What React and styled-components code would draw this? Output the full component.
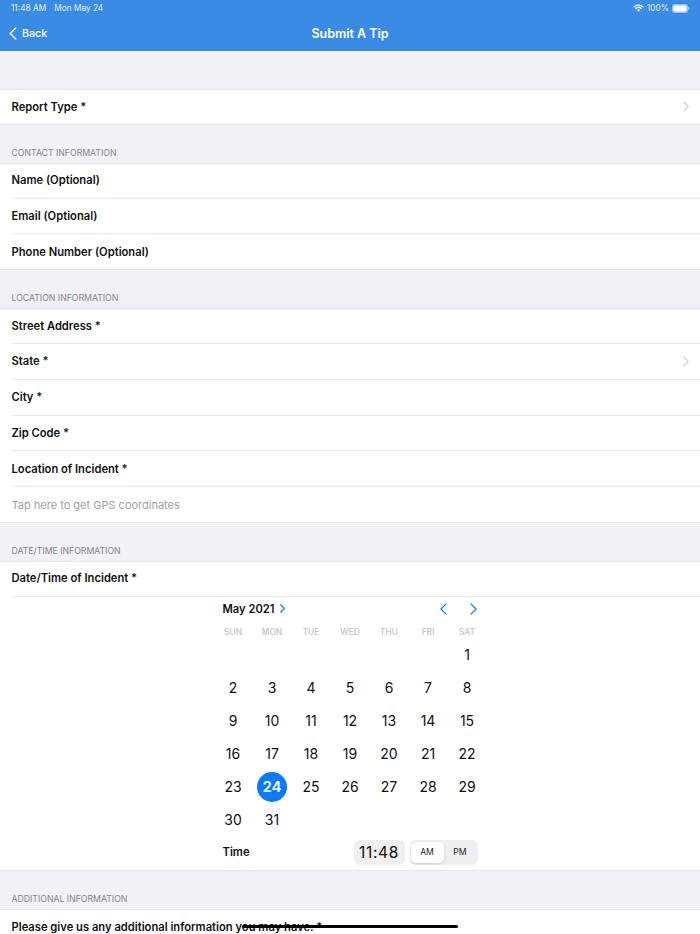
import React from "react";
import styled, { createGlobalStyle } from "styled-components";

const GlobalStyle = createGlobalStyle`
  html, body {
    margin: 0;
    padding: 0;
    background: #f1f1f6;
  }
  body {
    font-family: Inter, "Liberation Sans", sans-serif;
    -webkit-font-smoothing: antialiased;
  }
`;

const Page = styled.div`
  position: relative;
  width: 700px;
  height: 934px;
  overflow: hidden;
  background: #f1f1f6;
`;

const NavBar = styled.header`
  height: 51px;
  background: #3a8be3;
  color: #fff;
  box-sizing: border-box;
`;

const StatusBar = styled.div`
  display: flex;
  justify-content: space-between;
  align-items: center;
  height: 16px;
  padding: 0 10px 0 11px;
  font-size: 8.3px;
  color: #e4effb;
`;

const StatusGroup = styled.div`
  display: flex;
  align-items: center;
  gap: ${(p) => p.$gap}px;
`;

const NavRow = styled.div`
  display: grid;
  grid-template-columns: 1fr auto 1fr;
  align-items: center;
  height: 35px;
`;

const BackLink = styled.div`
  display: flex;
  align-items: center;
  gap: 5px;
  padding-left: 9px;
  font-size: 10.7px;
  font-weight: 500;
`;

const Title = styled.div`
  font-size: 12.5px;
  font-weight: 600;
`;

const SectionHead = styled.div`
  display: flex;
  align-items: flex-end;
  height: 38.1px;
  box-sizing: border-box;
  padding: 0 11.5px 5px;
  font-size: 8.7px;
  color: #85858b;
`;

const Group = styled.section`
  background: #fff;
  box-shadow: inset 0 -1px 0 #e6e6ea, inset 0 1px 0 #e6e6ea;
`;

const Row = styled.div`
  height: 35.75px;
  box-sizing: border-box;
  margin-left: 11.5px;
  display: flex;
  align-items: center;
  justify-content: space-between;
  padding-right: 11px;
  border-bottom: ${(p) => (p.$last ? "none" : "1px solid #e9e9ed")};
  font-size: ${(p) => (p.$hint ? 11 : 11.2)}px;
  font-weight: ${(p) => (p.$hint ? 400 : 600)};
  color: ${(p) => (p.$hint ? "#a0a0a5" : "#111")};
`;

const Calendar = styled.div`
  width: 273px;
  margin: 0 auto;
  padding-bottom: 6.2px;
`;

const MonthBar = styled.div`
  display: flex;
  align-items: center;
  justify-content: space-between;
  height: 24px;
  padding: 0 10px 0 9px;
`;

const MonthLabel = styled.div`
  display: flex;
  align-items: center;
  gap: 5px;
  font-size: 11.2px;
  font-weight: 600;
  color: #111;
`;

const MonthNav = styled.div`
  display: flex;
  align-items: center;
  gap: 23px;
`;

const WeekGrid = styled.div`
  display: grid;
  grid-template-columns: repeat(7, 39px);
  height: 17.5px;
  box-sizing: border-box;
  padding-top: 6.4px;
  align-items: start;
`;

const WeekDay = styled.div`
  text-align: center;
  font-size: 8.4px;
  line-height: 10px;
  font-weight: 500;
  color: #c3c3c6;
`;

const DayGrid = styled.div`
  display: grid;
  grid-template-columns: repeat(7, 39px);
  grid-auto-rows: 33px;
`;

const Day = styled.div`
  display: flex;
  align-items: center;
  justify-content: center;
  font-size: 14px;
  font-weight: 400;
  color: #111;
`;

const Today = styled.div`
  width: 30px;
  height: 30px;
  border-radius: 50%;
  background: #0a7bfe;
  color: #fff;
  font-weight: 600;
  font-size: 15px;
  display: flex;
  align-items: center;
  justify-content: center;
`;

const TimeRow = styled.div`
  display: flex;
  align-items: center;
  justify-content: space-between;
  height: 26px;
  margin-top: 3px;
  padding: 0 9px;
`;

const TimeLabel = styled.div`
  font-size: 11.2px;
  font-weight: 600;
  color: #111;
`;

const TimeControls = styled.div`
  display: flex;
  align-items: center;
  gap: 5px;
`;

const TimeBox = styled.div`
  width: 51px;
  height: 25px;
  border-radius: 6px;
  background: #efeff0;
  display: flex;
  align-items: center;
  justify-content: center;
  font-size: 15.5px;
  font-weight: 400;
  letter-spacing: 0.7px;
  color: #111;
`;

const Segments = styled.div`
  display: flex;
  width: 68px;
  height: 25px;
  box-sizing: border-box;
  padding: 2px 1px;
  border-radius: 6px;
  background: #efeff0;
`;

const Segment = styled.div`
  flex: 1;
  display: flex;
  align-items: center;
  justify-content: center;
  border-radius: 5px;
  font-size: 8.6px;
  font-weight: 400;
  color: #222;
  background: ${(p) => (p.$active ? "#fff" : "transparent")};
  box-shadow: ${(p) => (p.$active ? "0 1px 3px rgba(0,0,0,0.14)" : "none")};
`;

const HomeIndicator = styled.div`
  position: absolute;
  left: 242px;
  bottom: 6px;
  width: 216px;
  height: 3px;
  border-radius: 2px;
  background: #000;
`;

const Chevron = ({ dir = "right", color, w, h, sw = 1.5 }) => (
  <svg width={w} height={h} viewBox="0 0 8 14" fill="none">
    <path
      d={dir === "right" ? "M1 1l6 6-6 6" : "M7 1L1 7l6 6"}
      stroke={color}
      strokeWidth={sw}
      strokeLinecap="round"
      strokeLinejoin="round"
    />
  </svg>
);

const Wifi = () => (
  <svg width="11" height="8" viewBox="0 0 22 16" fill="none" stroke="#fff" strokeLinecap="round">
    <path d="M2 5.5C7 1 15 1 20 5.5" strokeWidth="2.4" />
    <path d="M5.5 9c3-2.6 8-2.6 11 0" strokeWidth="2.4" />
    <path d="M11 14.5l-2.4-2.6c1.4-1 3.4-1 4.8 0z" fill="#fff" strokeWidth="1" />
  </svg>
);

const Battery = () => (
  <svg width="18" height="9" viewBox="0 0 18 9">
    <rect x="0.4" y="0.4" width="15.2" height="8.2" rx="2" fill="none" stroke="#cfe2f7" strokeWidth="0.7" />
    <rect x="1.3" y="1.3" width="13.4" height="6.4" rx="1.2" fill="#fff" />
    <path d="M16.4 3v3c.7-.2 1.1-.8 1.1-1.5S17.1 3.200 16.400 3z" fill="#cfe2f7" />
  </svg>
);

const contactRows = ["Name (Optional)", "Email (Optional)", "Phone Number (Optional)"];
const locationRows = [
  { label: "Street Address *" },
  { label: "State *", more: true },
  { label: "City *" },
  { label: "Zip Code *" },
  { label: "Location of Incident *" },
];
const weekDays = ["SUN", "MON", "TUE", "WED", "THU", "FRI", "SAT"];
const days = [...Array(6).fill(null), ...Array.from({ length: 31 }, (_, i) => i + 1)];

function App() {
  return (
    <Page>
      <GlobalStyle />
      <NavBar>
        <StatusBar>
          <StatusGroup $gap={8}>
            <span>11:48 AM</span>
            <span>Mon May 24</span>
          </StatusGroup>
          <StatusGroup $gap={3}>
            <Wifi />
            <span>100%</span>
            <Battery />
          </StatusGroup>
        </StatusBar>
        <NavRow>
          <BackLink>
            <Chevron dir="left" color="#fff" w={8} h={13} sw={1.5} />
            Back
          </BackLink>
          <Title>Submit A Tip</Title>
          <div />
        </NavRow>
      </NavBar>

      <SectionHead />
      <Group>
        <Row $last>
          Report Type *
          <Chevron color="#bdbdc1" w={6} h={11} sw={1.4} />
        </Row>
      </Group>

      <SectionHead>CONTACT INFORMATION</SectionHead>
      <Group>
        {contactRows.map((label, i) => (
          <Row key={label} $last={i === contactRows.length - 1}>
            {label}
          </Row>
        ))}
      </Group>

      <SectionHead>LOCATION INFORMATION</SectionHead>
      <Group>
        {locationRows.map((row) => (
          <Row key={row.label}>
            {row.label}
            {row.more && <Chevron color="#bdbdc1" w={6} h={11} sw={1.4} />}
          </Row>
        ))}
        <Row $hint $last>
          Tap here to get GPS coordinates
        </Row>
      </Group>

      <SectionHead>DATE/TIME INFORMATION</SectionHead>
      <Group>
        <Row>Date/Time of Incident *</Row>
        <Calendar>
          <MonthBar>
            <MonthLabel>
              May 2021
              <Chevron color="#0a7bfe" w={5} h={9} sw={1.8} />
            </MonthLabel>
            <MonthNav>
              <Chevron dir="left" color="#0a7bfe" w={7} h={12} sw={1.4} />
              <Chevron color="#0a7bfe" w={7} h={12} sw={1.4} />
            </MonthNav>
          </MonthBar>
          <WeekGrid>
            {weekDays.map((d) => (
              <WeekDay key={d}>{d}</WeekDay>
            ))}
          </WeekGrid>
          <DayGrid>
            {days.map((d, i) => (
              <Day key={i}>{d === 24 ? <Today>{d}</Today> : d}</Day>
            ))}
          </DayGrid>
          <TimeRow>
            <TimeLabel>Time</TimeLabel>
            <TimeControls>
              <TimeBox>11:48</TimeBox>
              <Segments>
                <Segment $active>AM</Segment>
                <Segment>PM</Segment>
              </Segments>
            </TimeControls>
          </TimeRow>
        </Calendar>
      </Group>

      <SectionHead>ADDITIONAL INFORMATION</SectionHead>
      <Group>
        <Row $last>Please give us any additional information you may have. *</Row>
      </Group>

      <HomeIndicator />
    </Page>
  );
}

export default App;
